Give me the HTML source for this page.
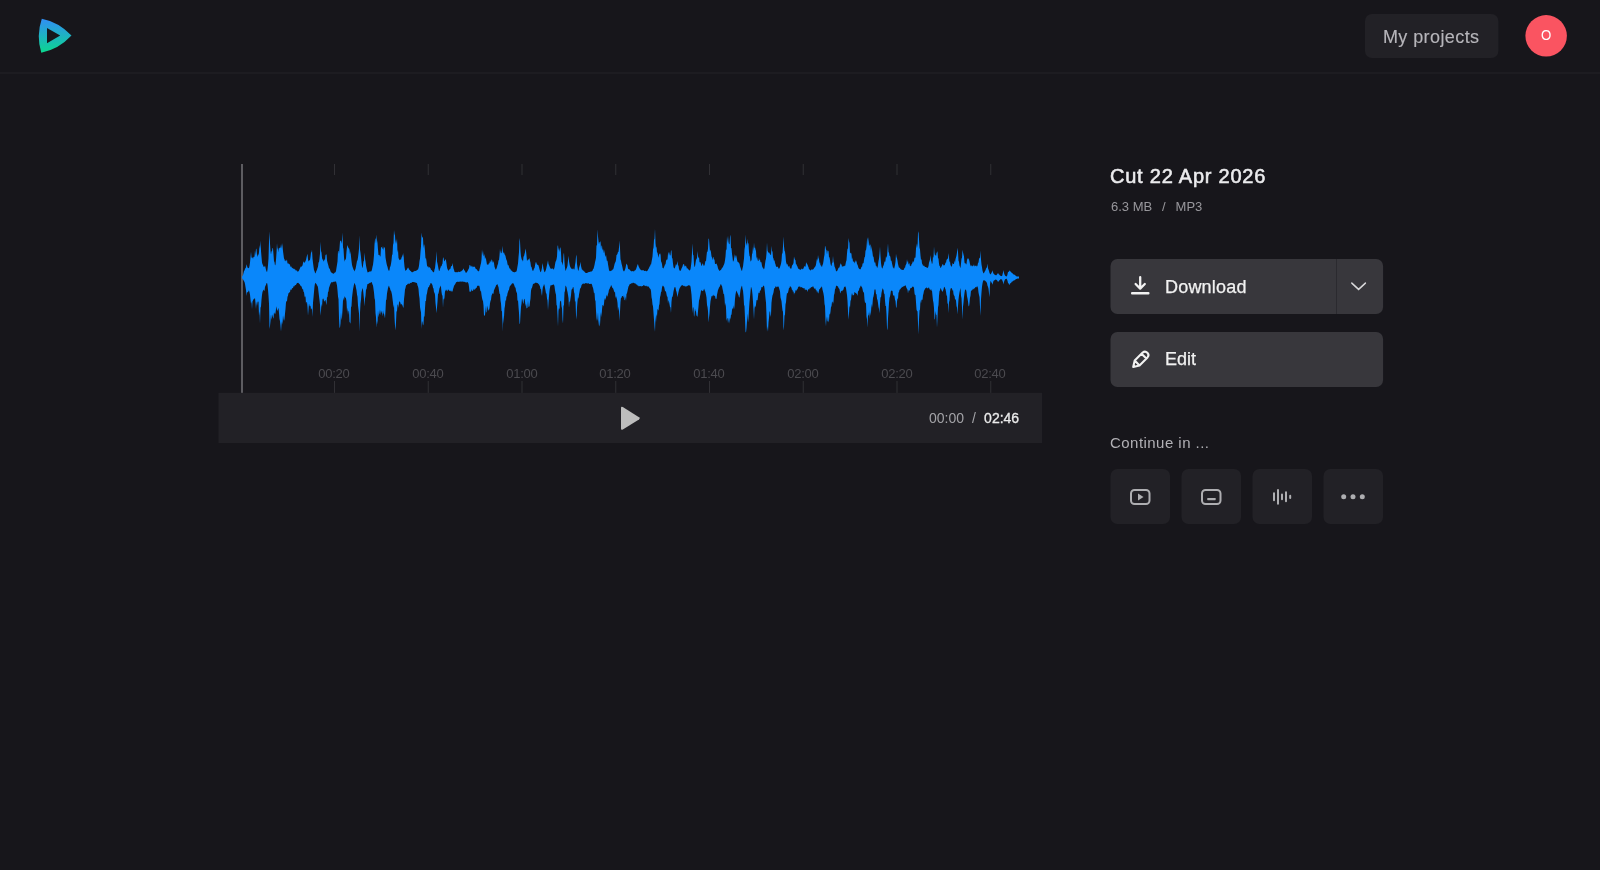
<!DOCTYPE html>
<html><head><meta charset="utf-8">
<style>
*{margin:0;padding:0;box-sizing:border-box}
html,body{width:1600px;height:870px;overflow:hidden;background:#17161b;font-family:"Liberation Sans",sans-serif}
.abs{position:absolute}
div{will-change:transform}
#myproj{position:absolute;left:1365px;top:14px;height:44px;color:#b6b5ba;font-size:18px;line-height:44px;padding-top:0.5px;padding-left:17.9px;letter-spacing:0.42px;white-space:nowrap;-webkit-text-stroke:0.15px #b6b5ba}
#avatar{position:absolute;left:1525.4px;top:15.1px;width:41.5px;height:41.5px;color:#fff;font-size:14.4px;line-height:41.5px;text-align:center}
#avatar span{display:inline-block;transform:translate(0.6px,0px) scaleX(0.92)}
.lbl{position:absolute;top:366px;width:60px;margin-left:-30px;text-align:center;font-size:13px;color:#4b4a4f;line-height:16px;letter-spacing:-0.3px;text-indent:-0.3px}
#time{position:absolute;top:410px;left:928.9px;font-size:14px;line-height:16px;color:#a3a3a7;white-space:nowrap}
#time b{font-weight:normal;color:#ebebeb;-webkit-text-stroke:0.3px #ebebeb}
#title{position:absolute;left:1110.35px;top:164.4px;font-size:20px;-webkit-text-stroke:0.55px #ececee;color:#ececee;line-height:24px;letter-spacing:0.77px;white-space:nowrap}
#sub{position:absolute;left:1110.6px;top:199px;font-size:13px;color:#98979c;line-height:16px;white-space:nowrap}
.bt{position:absolute;left:1165px;height:55px;line-height:55px;font-size:18px;color:#f2f2f2;-webkit-text-stroke:0.25px #f2f2f2;letter-spacing:0.2px;white-space:nowrap}
#cont{position:absolute;left:1110px;top:434px;font-size:15px;color:#b1b0b5;line-height:18px;letter-spacing:0.46px;white-space:nowrap}
</style></head><body>
<svg class="abs" style="left:0;top:0" width="1600" height="870" viewBox="0 0 1600 870">
<defs><linearGradient id="lg" x1="0" y1="0" x2="0" y2="1"><stop offset="0" stop-color="#318ef5"/><stop offset="1" stop-color="#0bd88e"/></linearGradient></defs>
<!-- header -->
<rect x="0" y="72" width="1600" height="2" fill="#1d1c21"/>
<path fill="url(#lg)" fill-rule="evenodd" d="M41.8 18.8 Q58.5 22 71.5 35.6 Q58.5 49.5 41.3 52.8 Q36 36 41.8 18.8 Z M47 28 L47 43.3 L60.2 35.6 Z"/>
<rect x="1365" y="14" width="133.4" height="44" rx="7" fill="#222126"/>
<circle cx="1546.15" cy="35.85" r="20.75" fill="#fa5461"/>
<!-- waveform -->
<g fill="#313035">
<rect x="334.00" y="164" width="1" height="11"/><rect x="334.00" y="381" width="1" height="12"/>
<rect x="427.75" y="164" width="1" height="11"/><rect x="427.75" y="381" width="1" height="12"/>
<rect x="521.50" y="164" width="1" height="11"/><rect x="521.50" y="381" width="1" height="12"/>
<rect x="615.25" y="164" width="1" height="11"/><rect x="615.25" y="381" width="1" height="12"/>
<rect x="709.00" y="164" width="1" height="11"/><rect x="709.00" y="381" width="1" height="12"/>
<rect x="802.75" y="164" width="1" height="11"/><rect x="802.75" y="381" width="1" height="12"/>
<rect x="896.50" y="164" width="1" height="11"/><rect x="896.50" y="381" width="1" height="12"/>
<rect x="990.25" y="164" width="1" height="11"/><rect x="990.25" y="381" width="1" height="12"/>
</g>
<rect x="241" y="164" width="2" height="229" fill="#5d5c61"/>
<path fill="#0a87fa" d="M242 277.5 L242.0 276.5 L242.5 275.9 L243.0 275.0 L243.5 273.1 L244.0 270.9 L244.5 270.4 L245.0 269.0 L245.5 268.1 L246.0 267.6 L246.5 264.3 L247.0 265.8 L247.5 267.8 L248.0 267.8 L248.5 268.2 L249.0 267.9 L249.5 266.0 L250.0 262.5 L250.5 257.2 L251.0 251.7 L251.5 257.2 L252.0 258.1 L252.5 257.3 L253.0 259.0 L253.5 256.7 L254.0 257.0 L254.5 256.4 L255.0 250.3 L255.5 255.4 L256.0 248.4 L256.5 249.3 L257.0 254.9 L257.5 257.0 L258.0 253.7 L258.5 255.5 L259.0 252.0 L259.5 245.0 L260.0 248.8 L260.5 240.5 L261.0 251.0 L261.5 256.7 L262.0 262.5 L262.5 264.3 L263.0 265.1 L263.5 266.7 L264.0 266.8 L264.5 266.7 L265.0 265.6 L265.5 267.6 L266.0 269.7 L266.5 271.2 L267.0 272.2 L267.5 269.4 L268.0 265.0 L268.5 258.4 L269.0 241.7 L269.5 231.2 L270.0 243.5 L270.5 251.1 L271.0 254.4 L271.5 251.3 L272.0 251.2 L272.5 247.7 L273.0 248.4 L273.5 254.4 L274.0 261.2 L274.5 261.9 L275.0 265.6 L275.5 264.4 L276.0 259.7 L276.5 252.7 L277.0 243.1 L277.5 249.7 L278.0 247.3 L278.5 252.6 L279.0 247.7 L279.5 248.4 L280.0 247.3 L280.5 248.1 L281.0 244.2 L281.5 248.8 L282.0 243.1 L282.5 246.0 L283.0 251.1 L283.5 254.7 L284.0 258.5 L284.5 259.2 L285.0 261.6 L285.5 260.1 L286.0 261.6 L286.5 260.3 L287.0 259.6 L287.5 264.0 L288.0 262.6 L288.5 263.8 L289.0 264.3 L289.5 264.1 L290.0 265.0 L290.5 266.7 L291.0 266.8 L291.5 266.6 L292.0 268.2 L292.5 267.7 L293.0 268.5 L293.5 268.9 L294.0 268.2 L294.5 269.5 L295.0 269.0 L295.5 270.2 L296.0 270.4 L296.5 270.6 L297.0 270.6 L297.5 271.7 L298.0 271.5 L298.5 271.2 L299.0 270.4 L299.5 269.2 L300.0 268.3 L300.5 266.9 L301.0 266.3 L301.5 266.9 L302.0 265.9 L302.5 265.4 L303.0 263.0 L303.5 261.8 L304.0 261.6 L304.5 263.1 L305.0 262.2 L305.5 261.0 L306.0 260.0 L306.5 257.4 L307.0 255.5 L307.5 253.7 L308.0 258.9 L308.5 261.6 L309.0 260.8 L309.5 260.3 L310.0 259.9 L310.5 257.1 L311.0 252.6 L311.5 252.2 L312.0 249.7 L312.5 258.5 L313.0 262.8 L313.5 266.4 L314.0 270.0 L314.5 271.1 L315.0 272.8 L315.5 273.5 L316.0 271.9 L316.5 270.7 L317.0 269.7 L317.5 268.0 L318.0 266.7 L318.5 262.6 L319.0 262.0 L319.5 258.6 L320.0 253.4 L320.5 241.8 L321.0 251.1 L321.5 252.5 L322.0 257.4 L322.5 260.0 L323.0 259.0 L323.5 261.4 L324.0 261.1 L324.5 259.0 L325.0 260.3 L325.5 254.5 L326.0 255.3 L326.5 253.7 L327.0 260.5 L327.5 262.4 L328.0 264.2 L328.5 266.1 L329.0 268.2 L329.5 268.4 L330.0 269.6 L330.5 271.2 L331.0 272.2 L331.5 272.6 L332.0 273.1 L332.5 273.3 L333.0 273.4 L333.5 273.7 L334.0 273.5 L334.5 272.7 L335.0 272.6 L335.5 272.2 L336.0 270.9 L336.5 267.8 L337.0 264.8 L337.5 261.5 L338.0 251.1 L338.5 251.0 L339.0 254.0 L339.5 247.9 L340.0 241.6 L340.5 240.7 L341.0 240.5 L341.5 243.7 L342.0 240.3 L342.5 232.6 L343.0 247.2 L343.5 249.0 L344.0 257.0 L344.5 261.7 L345.0 259.7 L345.5 259.8 L346.0 258.2 L346.5 251.5 L347.0 247.1 L347.5 245.1 L348.0 246.9 L348.5 248.0 L349.0 248.5 L349.5 249.7 L350.0 254.4 L350.5 251.1 L351.0 256.5 L351.5 260.9 L352.0 264.8 L352.5 266.8 L353.0 267.9 L353.5 269.4 L354.0 270.3 L354.5 271.6 L355.0 270.1 L355.5 269.1 L356.0 266.4 L356.5 263.8 L357.0 260.9 L357.5 260.2 L358.0 257.5 L358.5 253.4 L359.0 248.7 L359.5 235.2 L360.0 249.7 L360.5 252.8 L361.0 257.0 L361.5 262.0 L362.0 266.5 L362.5 268.3 L363.0 265.4 L363.5 261.4 L364.0 260.7 L364.5 252.4 L365.0 258.7 L365.5 261.7 L366.0 265.4 L366.5 268.1 L367.0 270.3 L367.5 272.2 L368.0 272.5 L368.5 271.9 L369.0 272.1 L369.5 271.6 L370.0 271.2 L370.5 271.6 L371.0 271.4 L371.5 270.9 L372.0 269.3 L372.5 266.7 L373.0 264.8 L373.5 260.8 L374.0 255.1 L374.5 244.5 L375.0 239.4 L375.5 237.9 L376.0 243.8 L376.5 234.6 L377.0 240.0 L377.5 242.9 L378.0 249.6 L378.5 255.1 L379.0 255.0 L379.5 254.8 L380.0 256.5 L380.5 256.3 L381.0 247.1 L381.5 247.1 L382.0 247.9 L382.5 249.2 L383.0 245.8 L383.5 250.4 L384.0 246.8 L384.5 247.4 L385.0 248.4 L385.5 257.6 L386.0 260.6 L386.5 263.2 L387.0 265.6 L387.5 266.8 L388.0 269.0 L388.5 270.2 L389.0 270.9 L389.5 269.9 L390.0 267.1 L390.5 266.3 L391.0 263.8 L391.5 260.5 L392.0 255.2 L392.5 254.2 L393.0 244.9 L393.5 242.9 L394.0 229.9 L394.5 233.9 L395.0 235.5 L395.5 243.8 L396.0 239.3 L396.5 243.9 L397.0 237.9 L397.5 252.6 L398.0 249.7 L398.5 257.9 L399.0 259.0 L399.5 260.3 L400.0 259.4 L400.5 259.4 L401.0 259.7 L401.5 257.8 L402.0 256.6 L402.5 254.1 L403.0 257.6 L403.5 252.4 L404.0 261.3 L404.5 266.6 L405.0 269.5 L405.5 270.9 L406.0 270.2 L406.5 269.9 L407.0 269.3 L407.5 268.3 L408.0 267.6 L408.5 268.0 L409.0 269.4 L409.5 269.8 L410.0 270.4 L410.5 271.0 L411.0 271.3 L411.5 272.0 L412.0 272.2 L412.5 272.2 L413.0 272.0 L413.5 271.4 L414.0 271.4 L414.5 271.1 L415.0 270.8 L415.5 270.9 L416.0 271.0 L416.5 270.5 L417.0 269.9 L417.5 269.7 L418.0 269.6 L418.5 268.1 L419.0 265.7 L419.5 261.0 L420.0 258.6 L420.5 251.7 L421.0 246.3 L421.5 232.6 L422.0 236.6 L422.5 237.3 L423.0 238.1 L423.5 248.3 L424.0 243.9 L424.5 245.8 L425.0 251.0 L425.5 258.7 L426.0 258.1 L426.5 261.1 L427.0 265.6 L427.5 267.1 L428.0 265.8 L428.5 267.4 L429.0 267.6 L429.5 267.0 L430.0 267.7 L430.5 268.3 L431.0 269.7 L431.5 270.0 L432.0 270.5 L432.5 271.2 L433.0 271.9 L433.5 272.2 L434.0 272.2 L434.5 269.5 L435.0 268.1 L435.5 263.4 L436.0 259.1 L436.5 251.1 L437.0 261.4 L437.5 263.6 L438.0 266.0 L438.5 268.7 L439.0 270.9 L439.5 270.7 L440.0 268.7 L440.5 267.7 L441.0 265.8 L441.5 266.4 L442.0 264.4 L442.5 263.5 L443.0 257.7 L443.5 257.6 L444.0 260.5 L444.5 261.4 L445.0 260.2 L445.5 259.0 L446.0 260.2 L446.5 263.6 L447.0 267.3 L447.5 269.2 L448.0 269.7 L448.5 270.9 L449.0 270.1 L449.5 269.3 L450.0 269.3 L450.5 268.6 L451.0 266.4 L451.5 266.0 L452.0 265.9 L452.5 263.0 L453.0 265.8 L453.5 268.4 L454.0 269.8 L454.5 271.7 L455.0 272.2 L455.5 272.0 L456.0 272.6 L456.5 271.9 L457.0 272.2 L457.5 272.2 L458.0 272.0 L458.5 271.6 L459.0 272.1 L459.5 272.1 L460.0 271.7 L460.5 271.6 L461.0 271.4 L461.5 270.9 L462.0 270.5 L462.5 270.2 L463.0 269.6 L463.5 268.3 L464.0 269.7 L464.5 270.6 L465.0 271.1 L465.5 272.3 L466.0 272.9 L466.5 272.6 L467.0 272.1 L467.5 271.0 L468.0 270.3 L468.5 269.0 L469.0 268.2 L469.5 265.0 L470.0 265.1 L470.5 265.8 L471.0 266.9 L471.5 266.3 L472.0 265.4 L472.5 267.5 L473.0 266.1 L473.5 267.1 L474.0 267.1 L474.5 266.6 L475.0 266.9 L475.5 268.5 L476.0 268.9 L476.5 269.3 L477.0 269.6 L477.5 270.7 L478.0 270.7 L478.5 271.3 L479.0 271.6 L479.5 269.2 L480.0 267.5 L480.5 265.1 L481.0 263.3 L481.5 259.4 L482.0 249.1 L482.5 255.2 L483.0 250.7 L483.5 255.2 L484.0 256.6 L484.5 253.7 L485.0 259.2 L485.5 256.9 L486.0 259.0 L486.5 261.7 L487.0 264.7 L487.5 264.3 L488.0 265.0 L488.5 264.2 L489.0 263.0 L489.5 263.5 L490.0 260.3 L490.5 261.6 L491.0 262.5 L491.5 259.6 L492.0 259.7 L492.5 261.6 L493.0 262.9 L493.5 261.0 L494.0 263.1 L494.5 266.7 L495.0 267.9 L495.5 269.6 L496.0 269.6 L496.5 268.6 L497.0 266.9 L497.5 265.0 L498.0 264.0 L498.5 260.3 L499.0 260.2 L499.5 255.5 L500.0 248.4 L500.5 253.5 L501.0 250.3 L501.5 253.2 L502.0 253.0 L502.5 245.8 L503.0 251.3 L503.5 253.5 L504.0 252.3 L504.5 254.3 L505.0 255.0 L505.5 256.1 L506.0 258.5 L506.5 260.0 L507.0 260.9 L507.5 264.1 L508.0 265.5 L508.5 264.9 L509.0 266.9 L509.5 268.6 L510.0 268.4 L510.5 269.2 L511.0 270.5 L511.5 270.4 L512.0 270.9 L512.5 271.6 L513.0 272.2 L513.5 272.1 L514.0 271.9 L514.5 272.4 L515.0 272.0 L515.5 271.9 L516.0 271.5 L516.5 271.6 L517.0 269.2 L517.5 266.3 L518.0 263.4 L518.5 257.2 L519.0 251.9 L519.5 237.9 L520.0 241.3 L520.5 251.0 L521.0 256.3 L521.5 258.5 L522.0 260.0 L522.5 260.3 L523.0 261.7 L523.5 256.4 L524.0 256.3 L524.5 254.1 L525.0 252.2 L525.5 248.4 L526.0 251.1 L526.5 255.6 L527.0 261.0 L527.5 260.3 L528.0 259.6 L528.5 259.2 L529.0 259.7 L529.5 257.7 L530.0 260.7 L530.5 262.8 L531.0 266.7 L531.5 266.8 L532.0 269.1 L532.5 270.4 L533.0 270.9 L533.5 270.2 L534.0 268.6 L534.5 268.2 L535.0 265.6 L535.5 263.0 L536.0 261.7 L536.5 263.3 L537.0 264.4 L537.5 264.8 L538.0 264.9 L538.5 265.6 L539.0 267.2 L539.5 269.3 L540.0 270.7 L540.5 272.2 L541.0 271.7 L541.5 269.9 L542.0 267.8 L542.5 263.0 L543.0 265.6 L543.5 268.9 L544.0 270.5 L544.5 272.2 L545.0 272.0 L545.5 270.8 L546.0 269.4 L546.5 267.2 L547.0 265.1 L547.5 262.8 L548.0 260.3 L548.5 264.1 L549.0 264.9 L549.5 266.3 L550.0 267.5 L550.5 268.3 L551.0 269.3 L551.5 268.2 L552.0 269.3 L552.5 268.3 L553.0 268.5 L553.5 269.8 L554.0 268.9 L554.5 267.4 L555.0 264.6 L555.5 261.7 L556.0 261.1 L556.5 259.2 L557.0 256.5 L557.5 246.4 L558.0 245.1 L558.5 250.6 L559.0 247.4 L559.5 251.9 L560.0 248.6 L560.5 247.1 L561.0 252.5 L561.5 261.9 L562.0 262.5 L562.5 265.6 L563.0 262.0 L563.5 254.8 L564.0 252.4 L564.5 262.3 L565.0 267.7 L565.5 270.9 L566.0 269.9 L566.5 268.6 L567.0 267.5 L567.5 265.4 L568.0 260.3 L568.5 255.7 L569.0 260.9 L569.5 263.9 L570.0 266.3 L570.5 267.3 L571.0 268.3 L571.5 269.0 L572.0 268.3 L572.5 269.6 L573.0 268.6 L573.5 268.6 L574.0 269.7 L574.5 268.9 L575.0 265.0 L575.5 262.2 L576.0 256.8 L576.5 254.4 L577.0 264.1 L577.5 267.3 L578.0 269.9 L578.5 270.9 L579.0 268.1 L579.5 266.6 L580.0 264.7 L580.5 261.7 L581.0 266.0 L581.5 268.0 L582.0 269.7 L582.5 269.6 L583.0 270.8 L583.5 270.6 L584.0 271.6 L584.5 271.4 L585.0 272.4 L585.5 272.7 L586.0 272.9 L586.5 272.9 L587.0 273.1 L587.5 272.8 L588.0 272.3 L588.5 272.2 L589.0 272.1 L589.5 272.1 L590.0 271.8 L590.5 271.6 L591.0 271.8 L591.5 271.6 L592.0 270.9 L592.5 270.7 L593.0 269.3 L593.5 268.8 L594.0 266.9 L594.5 265.1 L595.0 262.3 L595.5 260.3 L596.0 257.7 L596.5 244.7 L597.0 245.9 L597.5 229.3 L598.0 236.6 L598.5 241.2 L599.0 244.4 L599.5 241.8 L600.0 242.5 L600.5 240.8 L601.0 248.9 L601.5 245.6 L602.0 245.8 L602.5 250.4 L603.0 248.7 L603.5 250.9 L604.0 253.5 L604.5 249.8 L605.0 255.4 L605.5 256.9 L606.0 254.3 L606.5 258.6 L607.0 261.5 L607.5 260.3 L608.0 264.3 L608.5 267.0 L609.0 269.9 L609.5 270.9 L610.0 271.2 L610.5 270.9 L611.0 270.8 L611.5 270.4 L612.0 270.5 L612.5 269.6 L613.0 269.5 L613.5 268.5 L614.0 266.6 L614.5 264.2 L615.0 262.8 L615.5 262.1 L616.0 260.1 L616.5 255.0 L617.0 254.8 L617.5 253.7 L618.0 251.8 L618.5 252.0 L619.0 247.2 L619.5 240.5 L620.0 248.4 L620.5 259.2 L621.0 260.8 L621.5 263.6 L622.0 265.6 L622.5 267.6 L623.0 269.9 L623.5 271.1 L624.0 271.6 L624.5 270.7 L625.0 269.5 L625.5 268.1 L626.0 265.3 L626.5 263.6 L627.0 264.5 L627.5 265.6 L628.0 268.4 L628.5 269.2 L629.0 268.9 L629.5 269.6 L630.0 270.2 L630.5 270.7 L631.0 270.7 L631.5 271.5 L632.0 271.3 L632.5 270.9 L633.0 271.2 L633.5 271.3 L634.0 271.6 L634.5 270.4 L635.0 270.4 L635.5 269.9 L636.0 269.2 L636.5 267.7 L637.0 266.3 L637.5 264.4 L638.0 264.3 L638.5 266.0 L639.0 267.2 L639.5 268.0 L640.0 269.2 L640.5 269.6 L641.0 269.9 L641.5 270.5 L642.0 269.9 L642.5 270.5 L643.0 270.0 L643.5 270.3 L644.0 270.7 L644.5 270.9 L645.0 271.0 L645.5 270.7 L646.0 270.7 L646.5 271.4 L647.0 270.9 L647.5 270.8 L648.0 269.7 L648.5 268.8 L649.0 268.3 L649.5 266.3 L650.0 266.7 L650.5 264.2 L651.0 264.8 L651.5 262.0 L652.0 259.3 L652.5 256.4 L653.0 249.5 L653.5 247.5 L654.0 239.7 L654.5 238.7 L655.0 228.6 L655.5 242.9 L656.0 248.0 L656.5 246.2 L657.0 252.4 L657.5 252.6 L658.0 255.6 L658.5 257.7 L659.0 254.4 L659.5 253.3 L660.0 255.1 L660.5 253.1 L661.0 261.2 L661.5 262.2 L662.0 264.1 L662.5 267.8 L663.0 268.3 L663.5 268.5 L664.0 267.1 L664.5 266.0 L665.0 264.2 L665.5 264.6 L666.0 261.1 L666.5 259.8 L667.0 259.4 L667.5 259.5 L668.0 253.7 L668.5 251.7 L669.0 255.8 L669.5 251.8 L670.0 255.6 L670.5 255.3 L671.0 250.6 L671.5 250.4 L672.0 258.1 L672.5 258.5 L673.0 263.6 L673.5 266.9 L674.0 268.3 L674.5 268.5 L675.0 267.4 L675.5 265.9 L676.0 264.0 L676.5 265.4 L677.0 263.4 L677.5 261.0 L678.0 265.5 L678.5 265.5 L679.0 268.9 L679.5 270.2 L680.0 270.9 L680.5 270.8 L681.0 269.9 L681.5 268.4 L682.0 267.4 L682.5 266.5 L683.0 264.6 L683.5 264.3 L684.0 264.1 L684.5 266.1 L685.0 266.8 L685.5 265.6 L686.0 265.9 L686.5 266.9 L687.0 268.8 L687.5 268.1 L688.0 269.0 L688.5 269.4 L689.0 269.9 L689.5 270.4 L690.0 270.2 L690.5 269.0 L691.0 265.7 L691.5 261.6 L692.0 252.4 L692.5 243.2 L693.0 254.6 L693.5 255.5 L694.0 264.1 L694.5 266.9 L695.0 266.4 L695.5 262.9 L696.0 260.1 L696.5 258.9 L697.0 258.1 L697.5 251.1 L698.0 255.9 L698.5 258.3 L699.0 257.0 L699.5 262.1 L700.0 262.6 L700.5 261.9 L701.0 264.3 L701.5 266.3 L702.0 265.0 L702.5 263.6 L703.0 263.6 L703.5 265.8 L704.0 265.6 L704.5 265.4 L705.0 263.0 L705.5 260.8 L706.0 261.3 L706.5 255.9 L707.0 251.4 L707.5 251.9 L708.0 248.6 L708.5 238.5 L709.0 239.0 L709.5 245.5 L710.0 251.3 L710.5 249.6 L711.0 252.4 L711.5 256.2 L712.0 257.6 L712.5 260.2 L713.0 256.9 L713.5 257.2 L714.0 259.7 L714.5 259.3 L715.0 264.0 L715.5 263.9 L716.0 263.8 L716.5 263.6 L717.0 264.7 L717.5 266.1 L718.0 268.3 L718.5 269.4 L719.0 270.0 L719.5 270.9 L720.0 270.8 L720.5 269.9 L721.0 270.1 L721.5 268.8 L722.0 268.3 L722.5 267.4 L723.0 266.7 L723.5 265.6 L724.0 264.6 L724.5 263.1 L725.0 260.3 L725.5 256.6 L726.0 249.0 L726.5 250.4 L727.0 236.5 L727.5 243.1 L728.0 235.6 L728.5 242.0 L729.0 244.1 L729.5 244.3 L730.0 237.1 L730.5 234.6 L731.0 248.3 L731.5 247.9 L732.0 253.7 L732.5 257.3 L733.0 261.7 L733.5 261.1 L734.0 259.6 L734.5 253.7 L735.0 258.4 L735.5 256.1 L736.0 255.0 L736.5 256.7 L737.0 259.5 L737.5 261.8 L738.0 262.0 L738.5 262.3 L739.0 263.2 L739.5 263.6 L740.0 266.0 L740.5 267.4 L741.0 269.0 L741.5 270.6 L742.0 270.9 L742.5 268.3 L743.0 266.6 L743.5 262.2 L744.0 258.4 L744.5 249.4 L745.0 246.4 L745.5 234.6 L746.0 242.8 L746.5 243.9 L747.0 246.1 L747.5 238.7 L748.0 243.4 L748.5 243.2 L749.0 252.0 L749.5 255.9 L750.0 256.5 L750.5 261.7 L751.0 260.8 L751.5 260.2 L752.0 254.5 L752.5 252.7 L753.0 246.6 L753.5 251.3 L754.0 242.5 L754.5 248.2 L755.0 247.3 L755.5 249.4 L756.0 250.9 L756.5 258.7 L757.0 256.4 L757.5 259.3 L758.0 260.9 L758.5 261.1 L759.0 257.8 L759.5 260.3 L760.0 259.4 L760.5 262.4 L761.0 261.7 L761.5 262.7 L762.0 265.7 L762.5 267.5 L763.0 267.7 L763.5 268.8 L764.0 269.6 L764.5 267.8 L765.0 264.1 L765.5 260.6 L766.0 258.8 L766.5 253.2 L767.0 242.5 L767.5 250.5 L768.0 251.7 L768.5 253.1 L769.0 252.1 L769.5 253.7 L770.0 253.2 L770.5 254.9 L771.0 254.9 L771.5 245.8 L772.0 251.4 L772.5 251.3 L773.0 257.4 L773.5 258.6 L774.0 261.1 L774.5 260.1 L775.0 262.9 L775.5 264.3 L776.0 266.6 L776.5 266.9 L777.0 266.6 L777.5 266.7 L778.0 267.0 L778.5 268.5 L779.0 268.7 L779.5 268.3 L780.0 266.9 L780.5 265.5 L781.0 263.7 L781.5 260.8 L782.0 253.5 L782.5 253.6 L783.0 246.2 L783.5 236.5 L784.0 246.2 L784.5 250.7 L785.0 251.8 L785.5 255.4 L786.0 261.7 L786.5 263.5 L787.0 264.7 L787.5 263.7 L788.0 265.9 L788.5 267.0 L789.0 265.6 L789.5 266.4 L790.0 268.2 L790.5 268.3 L791.0 268.9 L791.5 267.9 L792.0 265.4 L792.5 264.9 L793.0 264.2 L793.5 263.1 L794.0 256.4 L794.5 258.6 L795.0 259.8 L795.5 260.2 L796.0 264.8 L796.5 264.1 L797.0 266.0 L797.5 266.6 L798.0 268.3 L798.5 268.8 L799.0 269.2 L799.5 269.6 L800.0 269.2 L800.5 270.0 L801.0 269.4 L801.5 268.8 L802.0 268.4 L802.5 269.3 L803.0 269.3 L803.5 268.3 L804.0 267.0 L804.5 266.1 L805.0 266.4 L805.5 266.7 L806.0 263.2 L806.5 262.3 L807.0 264.4 L807.5 264.2 L808.0 266.3 L808.5 267.1 L809.0 269.2 L809.5 269.3 L810.0 270.2 L810.5 270.5 L811.0 270.1 L811.5 269.4 L812.0 269.2 L812.5 269.7 L813.0 269.5 L813.5 269.0 L814.0 268.3 L814.5 267.5 L815.0 266.7 L815.5 266.3 L816.0 264.6 L816.5 261.3 L817.0 258.6 L817.5 261.0 L818.0 255.0 L818.5 258.1 L819.0 258.9 L819.5 263.7 L820.0 261.9 L820.5 265.6 L821.0 265.3 L821.5 266.5 L822.0 266.9 L822.5 265.0 L823.0 263.9 L823.5 261.0 L824.0 257.2 L824.5 254.7 L825.0 245.8 L825.5 246.8 L826.0 249.5 L826.5 250.2 L827.0 254.4 L827.5 249.9 L828.0 251.6 L828.5 250.4 L829.0 257.3 L829.5 257.3 L830.0 260.1 L830.5 263.8 L831.0 265.6 L831.5 266.0 L832.0 263.1 L832.5 262.5 L833.0 255.7 L833.5 261.5 L834.0 263.0 L834.5 266.4 L835.0 267.5 L835.5 269.1 L836.0 270.9 L836.5 271.6 L837.0 270.8 L837.5 270.6 L838.0 269.1 L838.5 268.0 L839.0 267.4 L839.5 267.4 L840.0 265.0 L840.5 263.0 L841.0 265.0 L841.5 264.1 L842.0 267.0 L842.5 265.9 L843.0 266.9 L843.5 266.0 L844.0 266.1 L844.5 265.4 L845.0 266.5 L845.5 264.3 L846.0 261.7 L846.5 260.3 L847.0 253.5 L847.5 248.2 L848.0 249.2 L848.5 237.9 L849.0 241.3 L849.5 242.9 L850.0 253.5 L850.5 253.1 L851.0 252.4 L851.5 254.3 L852.0 259.7 L852.5 257.3 L853.0 261.8 L853.5 261.7 L854.0 261.1 L854.5 263.6 L855.0 261.9 L855.5 259.9 L856.0 262.7 L856.5 260.3 L857.0 264.2 L857.5 264.6 L858.0 266.3 L858.5 267.9 L859.0 268.4 L859.5 269.2 L860.0 268.9 L860.5 269.6 L861.0 268.2 L861.5 266.6 L862.0 267.0 L862.5 264.1 L863.0 263.0 L863.5 263.5 L864.0 259.9 L864.5 257.3 L865.0 256.8 L865.5 250.6 L866.0 250.2 L866.5 246.8 L867.0 239.8 L867.5 237.2 L868.0 246.1 L868.5 236.9 L869.0 242.5 L869.5 246.3 L870.0 244.5 L870.5 244.7 L871.0 251.0 L871.5 245.8 L872.0 249.8 L872.5 252.8 L873.0 256.7 L873.5 256.4 L874.0 260.1 L874.5 263.0 L875.0 261.7 L875.5 263.5 L876.0 266.6 L876.5 265.6 L877.0 267.8 L877.5 267.6 L878.0 265.1 L878.5 260.9 L879.0 258.8 L879.5 253.8 L880.0 246.5 L880.5 256.2 L881.0 263.1 L881.5 266.4 L882.0 268.3 L882.5 268.4 L883.0 266.4 L883.5 265.6 L884.0 264.0 L884.5 261.0 L885.0 262.5 L885.5 260.4 L886.0 255.9 L886.5 257.9 L887.0 255.9 L887.5 250.2 L888.0 243.2 L888.5 252.2 L889.0 252.6 L889.5 256.0 L890.0 255.7 L890.5 257.8 L891.0 261.6 L891.5 260.3 L892.0 263.5 L892.5 265.6 L893.0 267.7 L893.5 267.5 L894.0 268.9 L894.5 267.3 L895.0 264.9 L895.5 261.7 L896.0 253.7 L896.5 257.1 L897.0 258.3 L897.5 260.8 L898.0 264.0 L898.5 265.9 L899.0 267.7 L899.5 267.5 L900.0 268.3 L900.5 268.9 L901.0 269.4 L901.5 269.4 L902.0 269.9 L902.5 269.7 L903.0 270.2 L903.5 269.7 L904.0 269.4 L904.5 267.4 L905.0 267.9 L905.5 265.6 L906.0 264.5 L906.5 263.6 L907.0 259.0 L907.5 262.8 L908.0 260.7 L908.5 264.7 L909.0 263.6 L909.5 263.3 L910.0 266.4 L910.5 265.6 L911.0 266.3 L911.5 264.3 L912.0 263.8 L912.5 262.4 L913.0 260.7 L913.5 262.5 L914.0 260.8 L914.5 257.7 L915.0 257.8 L915.5 257.5 L916.0 248.5 L916.5 246.1 L917.0 243.2 L917.5 247.8 L918.0 233.2 L918.5 231.3 L919.0 239.2 L919.5 247.6 L920.0 249.6 L920.5 255.6 L921.0 260.0 L921.5 259.0 L922.0 263.6 L922.5 264.2 L923.0 265.8 L923.5 265.8 L924.0 265.6 L924.5 266.3 L925.0 266.9 L925.5 267.1 L926.0 266.9 L926.5 267.3 L927.0 268.2 L927.5 267.8 L928.0 267.6 L928.5 266.1 L929.0 262.8 L929.5 261.2 L930.0 259.6 L930.5 255.0 L931.0 260.2 L931.5 261.7 L932.0 264.3 L932.5 262.8 L933.0 256.3 L933.5 257.9 L934.0 246.5 L934.5 253.0 L935.0 255.6 L935.5 254.6 L936.0 256.4 L936.5 252.8 L937.0 252.4 L937.5 251.1 L938.0 258.3 L938.5 258.6 L939.0 263.7 L939.5 266.0 L940.0 266.3 L940.5 268.3 L941.0 267.5 L941.5 266.4 L942.0 265.4 L942.5 264.3 L943.0 264.0 L943.5 265.7 L944.0 265.1 L944.5 265.6 L945.0 264.4 L945.5 262.6 L946.0 262.8 L946.5 260.1 L947.0 259.3 L947.5 259.1 L948.0 258.0 L948.5 253.1 L949.0 257.4 L949.5 262.5 L950.0 261.0 L950.5 265.6 L951.0 265.6 L951.5 266.9 L952.0 266.1 L952.5 262.8 L953.0 264.0 L953.5 264.1 L954.0 263.8 L954.5 260.3 L955.0 262.8 L955.5 259.0 L956.0 257.6 L956.5 255.4 L957.0 252.2 L957.5 247.8 L958.0 252.1 L958.5 260.8 L959.0 261.8 L959.5 265.5 L960.0 266.8 L960.5 268.3 L961.0 263.4 L961.5 258.6 L962.0 258.0 L962.5 249.8 L963.0 252.5 L963.5 254.6 L964.0 256.6 L964.5 262.4 L965.0 263.4 L965.5 263.0 L966.0 264.5 L966.5 264.1 L967.0 259.8 L967.5 258.9 L968.0 257.7 L968.5 259.0 L969.0 259.5 L969.5 261.6 L970.0 264.0 L970.5 265.6 L971.0 266.4 L971.5 265.6 L972.0 265.3 L972.5 266.5 L973.0 266.0 L973.5 265.5 L974.0 264.3 L974.5 266.5 L975.0 266.0 L975.5 266.1 L976.0 265.1 L976.5 266.2 L977.0 266.5 L977.5 265.6 L978.0 263.0 L978.5 262.6 L979.0 258.9 L979.5 257.5 L980.0 258.5 L980.5 250.4 L981.0 259.6 L981.5 264.4 L982.0 267.3 L982.5 270.6 L983.0 272.3 L983.5 273.6 L984.0 272.8 L984.5 272.3 L985.0 270.8 L985.5 270.5 L986.0 268.4 L986.5 268.1 L987.0 267.1 L987.5 263.6 L988.0 268.2 L988.5 269.5 L989.0 270.9 L989.5 273.1 L990.0 273.8 L990.5 274.5 L991.0 273.8 L991.5 272.7 L992.0 271.9 L992.5 270.3 L993.0 272.3 L993.5 273.5 L994.0 274.2 L994.5 274.5 L995.0 275.1 L995.5 275.1 L996.0 275.4 L996.5 275.1 L997.0 274.6 L997.5 273.8 L998.0 273.0 L998.5 273.7 L999.0 274.6 L999.5 274.8 L1000.0 275.5 L1000.5 275.8 L1001.0 275.9 L1001.5 276.1 L1002.0 276.2 L1002.5 274.6 L1003.0 272.6 L1003.5 269.9 L1004.0 273.1 L1004.5 274.6 L1005.0 275.5 L1005.5 276.0 L1006.0 276.2 L1006.5 276.5 L1007.0 275.9 L1007.5 274.3 L1008.0 272.0 L1008.5 272.0 L1009.0 271.2 L1009.5 270.3 L1010.0 271.4 L1010.5 271.3 L1011.0 272.0 L1011.5 272.6 L1012.0 273.2 L1012.5 273.3 L1013.0 273.8 L1013.5 274.4 L1014.0 274.6 L1014.5 274.8 L1015.0 275.0 L1015.5 275.6 L1016.0 276.3 L1016.5 276.3 L1017.0 276.4 L1017.5 276.5 L1018.0 276.5 L1018.5 276.6 L1019.0 276.5 L1019.0 278.5 L1018.5 278.5 L1018.0 278.5 L1017.5 278.5 L1017.0 278.7 L1016.5 278.9 L1016.0 279.0 L1015.5 279.4 L1015.0 280.0 L1014.5 280.3 L1014.0 280.4 L1013.5 280.6 L1013.0 281.2 L1012.5 281.5 L1012.0 281.6 L1011.5 282.3 L1011.0 283.0 L1010.5 283.2 L1010.0 283.5 L1009.5 285.1 L1009.0 284.6 L1008.5 283.2 L1008.0 283.0 L1007.5 280.8 L1007.0 279.4 L1006.5 278.6 L1006.0 278.9 L1005.5 279.1 L1005.0 279.6 L1004.5 280.4 L1004.0 282.0 L1003.5 284.4 L1003.0 282.1 L1002.5 280.9 L1002.0 279.4 L1001.5 279.4 L1001.0 279.1 L1000.5 279.2 L1000.0 279.7 L999.5 280.2 L999.0 280.7 L998.5 281.5 L998.0 282.0 L997.5 281.0 L997.0 280.3 L996.5 280.0 L996.0 279.6 L995.5 279.6 L995.0 280.0 L994.5 280.2 L994.0 280.5 L993.5 281.1 L993.0 282.7 L992.5 284.8 L992.0 283.3 L991.5 282.6 L991.0 281.6 L990.5 281.0 L990.0 284.6 L989.5 297.3 L989.0 293.3 L988.5 288.7 L988.0 286.8 L987.5 285.7 L987.0 283.3 L986.5 282.3 L986.0 281.5 L985.5 281.3 L985.0 280.6 L984.5 280.4 L984.0 280.3 L983.5 280.2 L983.0 281.3 L982.5 283.5 L982.0 286.7 L981.5 292.4 L981.0 299.5 L980.5 315.9 L980.0 307.2 L979.5 297.1 L979.0 295.1 L978.5 292.4 L978.0 288.1 L977.5 286.8 L977.0 285.9 L976.5 287.6 L976.0 286.9 L975.5 287.1 L975.0 288.1 L974.5 288.0 L974.0 289.4 L973.5 288.9 L973.0 288.5 L972.5 289.7 L972.0 290.2 L971.5 290.7 L971.0 290.5 L970.5 295.8 L970.0 297.7 L969.5 303.3 L969.0 306.6 L968.5 305.7 L968.0 301.4 L967.5 298.6 L967.0 296.2 L966.5 291.8 L966.0 289.7 L965.5 289.4 L965.0 290.1 L964.5 293.0 L964.0 297.0 L963.5 302.6 L963.0 306.7 L962.5 319.8 L962.0 308.0 L961.5 298.3 L961.0 295.8 L960.5 288.1 L960.0 289.9 L959.5 292.6 L959.0 295.5 L958.5 299.4 L958.0 305.9 L957.5 314.5 L957.0 307.8 L956.5 306.1 L956.0 300.4 L955.5 299.2 L955.0 299.2 L954.5 296.0 L954.0 295.6 L953.5 294.1 L953.0 289.7 L952.5 291.1 L952.0 288.6 L951.5 288.3 L951.0 288.1 L950.5 288.9 L950.0 291.8 L949.5 300.4 L949.0 302.2 L948.5 313.2 L948.0 303.5 L947.5 303.7 L947.0 295.8 L946.5 295.6 L946.0 291.7 L945.5 289.2 L945.0 288.3 L944.5 286.8 L944.0 287.3 L943.5 289.4 L943.0 290.8 L942.5 292.1 L942.0 291.0 L941.5 290.3 L941.0 288.8 L940.5 288.1 L940.0 290.2 L939.5 291.3 L939.0 295.7 L938.5 305.0 L938.0 307.5 L937.5 317.8 L937.0 327.8 L936.5 315.0 L936.0 314.5 L935.5 311.1 L935.0 318.8 L934.5 319.8 L934.0 308.3 L933.5 303.1 L933.0 300.5 L932.5 296.0 L932.0 290.7 L931.5 290.7 L931.0 288.6 L930.5 290.4 L930.0 289.8 L929.5 289.0 L929.0 287.6 L928.5 287.6 L928.0 288.5 L927.5 288.1 L927.0 288.6 L926.5 287.3 L926.0 287.8 L925.5 288.3 L925.0 288.7 L924.5 290.1 L924.0 290.7 L923.5 293.6 L923.0 295.3 L922.5 300.0 L922.0 299.5 L921.5 300.0 L921.0 303.5 L920.5 300.3 L920.0 309.5 L919.5 310.6 L919.0 319.8 L918.5 334.4 L918.0 323.6 L917.5 311.3 L917.0 311.1 L916.5 309.5 L916.0 302.4 L915.5 294.8 L915.0 295.3 L914.5 293.3 L914.0 288.1 L913.5 286.7 L913.0 286.8 L912.5 286.4 L912.0 287.2 L911.5 287.9 L911.0 288.1 L910.5 288.1 L910.0 289.5 L909.5 290.9 L909.0 289.9 L908.5 290.8 L908.0 293.4 L907.5 289.7 L907.0 288.8 L906.5 287.9 L906.0 286.6 L905.5 285.3 L905.0 285.5 L904.5 286.0 L904.0 286.3 L903.5 286.2 L903.0 286.7 L902.5 287.2 L902.0 286.6 L901.5 288.1 L901.0 288.1 L900.5 289.1 L900.0 289.4 L899.5 289.7 L899.0 292.3 L898.5 292.6 L898.0 298.9 L897.5 298.3 L897.0 301.8 L896.5 307.9 L896.0 306.9 L895.5 301.0 L895.0 299.7 L894.5 296.4 L894.0 295.0 L893.5 295.9 L893.0 294.7 L892.5 291.1 L892.0 290.8 L891.5 290.7 L891.0 290.5 L890.5 293.7 L890.0 296.4 L889.5 297.7 L889.0 303.1 L888.5 311.0 L888.0 318.6 L887.5 330.4 L887.0 328.0 L886.5 314.6 L886.0 305.9 L885.5 305.9 L885.0 300.7 L884.5 293.5 L884.0 294.1 L883.5 289.5 L883.0 289.6 L882.5 288.1 L882.0 290.7 L881.5 292.9 L881.0 297.4 L880.5 297.0 L880.0 304.1 L879.5 313.2 L879.0 308.9 L878.5 307.1 L878.0 303.1 L877.5 299.9 L877.0 298.7 L876.5 294.0 L876.0 294.2 L875.5 289.5 L875.0 289.4 L874.5 289.4 L874.0 293.7 L873.5 296.5 L873.0 298.0 L872.5 304.2 L872.0 307.9 L871.5 303.8 L871.0 312.3 L870.5 316.1 L870.0 309.8 L869.5 319.0 L869.0 312.0 L868.5 315.8 L868.0 314.9 L867.5 327.8 L867.0 319.3 L866.5 316.8 L866.0 303.5 L865.5 302.4 L865.0 302.7 L864.5 299.8 L864.0 292.7 L863.5 292.3 L863.0 291.6 L862.5 289.1 L862.0 287.3 L861.5 286.8 L861.0 285.5 L860.5 286.1 L860.0 287.8 L859.5 287.7 L859.0 290.2 L858.5 290.8 L858.0 291.4 L857.5 296.0 L857.0 294.2 L856.5 293.7 L856.0 293.1 L855.5 292.9 L855.0 292.2 L854.5 292.1 L854.0 295.1 L853.5 295.0 L853.0 295.7 L852.5 294.7 L852.0 293.1 L851.5 295.2 L851.0 300.1 L850.5 300.7 L850.0 307.7 L849.5 305.4 L849.0 313.8 L848.5 319.8 L848.0 311.3 L847.5 301.0 L847.0 295.0 L846.5 291.8 L846.0 288.3 L845.5 286.8 L845.0 286.2 L844.5 287.1 L844.0 287.3 L843.5 289.4 L843.0 290.1 L842.5 290.5 L842.0 291.6 L841.5 290.7 L841.0 290.9 L840.5 293.4 L840.0 292.2 L839.5 289.2 L839.0 288.6 L838.5 287.9 L838.0 286.6 L837.5 286.3 L837.0 285.9 L836.5 285.5 L836.0 286.3 L835.5 288.4 L835.0 289.2 L834.5 293.5 L834.0 294.9 L833.5 301.7 L833.0 304.0 L832.5 301.4 L832.0 301.9 L831.5 306.3 L831.0 307.1 L830.5 311.7 L830.0 314.7 L829.5 313.5 L829.0 320.8 L828.5 322.5 L828.0 316.6 L827.5 321.3 L827.0 321.5 L826.5 316.2 L826.0 326.4 L825.5 321.1 L825.0 305.9 L824.5 303.9 L824.0 296.7 L823.5 293.8 L823.0 291.6 L822.5 289.8 L822.0 286.8 L821.5 286.5 L821.0 288.0 L820.5 287.4 L820.0 288.9 L819.5 289.0 L819.0 290.6 L818.5 293.1 L818.0 293.4 L817.5 290.8 L817.0 292.7 L816.5 290.1 L816.0 290.5 L815.5 288.9 L815.0 287.9 L814.5 288.9 L814.0 288.3 L813.5 287.1 L813.0 286.1 L812.5 286.8 L812.0 287.5 L811.5 286.9 L811.0 286.9 L810.5 288.6 L810.0 287.8 L809.5 288.7 L809.0 290.0 L808.5 288.7 L808.0 289.8 L807.5 292.1 L807.0 290.3 L806.5 289.7 L806.0 289.5 L805.5 289.5 L805.0 290.5 L804.5 288.3 L804.0 287.9 L803.5 288.4 L803.0 288.1 L802.5 288.1 L802.0 287.0 L801.5 287.6 L801.0 286.8 L800.5 287.8 L800.0 286.2 L799.5 286.8 L799.0 286.6 L798.5 286.8 L798.0 287.5 L797.5 289.3 L797.0 289.2 L796.5 291.0 L796.0 290.1 L795.5 290.5 L795.0 293.1 L794.5 292.7 L794.0 294.7 L793.5 291.0 L793.0 292.3 L792.5 289.7 L792.0 289.9 L791.5 288.1 L791.0 286.7 L790.5 286.7 L790.0 286.1 L789.5 287.9 L789.0 287.9 L788.5 290.6 L788.0 292.5 L787.5 293.4 L787.0 292.9 L786.5 296.5 L786.0 302.2 L785.5 304.6 L785.0 314.5 L784.5 315.8 L784.0 326.7 L783.5 330.4 L783.0 311.8 L782.5 310.6 L782.0 306.3 L781.5 301.2 L781.0 299.2 L780.5 297.6 L780.0 291.2 L779.5 289.8 L779.0 287.8 L778.5 286.8 L778.0 286.3 L777.5 287.0 L777.0 286.5 L776.5 287.4 L776.0 286.2 L775.5 286.5 L775.0 288.0 L774.5 288.1 L774.0 289.2 L773.5 292.4 L773.0 294.2 L772.5 295.5 L772.0 298.5 L771.5 302.7 L771.0 314.5 L770.5 316.9 L770.0 311.1 L769.5 312.2 L769.0 318.0 L768.5 322.5 L768.0 331.5 L767.5 326.3 L767.0 331.7 L766.5 315.6 L766.0 302.7 L765.5 298.3 L765.0 292.9 L764.5 288.4 L764.0 285.5 L763.5 285.7 L763.0 286.2 L762.5 287.4 L762.0 287.1 L761.5 287.1 L761.0 289.6 L760.5 290.7 L760.0 290.4 L759.5 293.2 L759.0 292.9 L758.5 292.4 L758.0 296.7 L757.5 300.4 L757.0 300.0 L756.5 300.2 L756.0 304.5 L755.5 307.5 L755.0 305.8 L754.5 308.6 L754.0 319.8 L753.5 309.9 L753.0 301.9 L752.5 294.8 L752.0 290.2 L751.5 287.9 L751.0 286.8 L750.5 291.8 L750.0 297.0 L749.5 302.3 L749.0 309.2 L748.5 318.5 L748.0 322.8 L747.5 313.6 L747.0 321.1 L746.5 327.9 L746.0 332.6 L745.5 331.7 L745.0 318.2 L744.5 306.5 L744.0 304.4 L743.5 296.1 L743.0 290.8 L742.5 289.0 L742.0 285.5 L741.5 286.6 L741.0 287.9 L740.5 289.9 L740.0 294.0 L739.5 297.3 L739.0 297.6 L738.5 295.2 L738.0 294.3 L737.5 292.9 L737.0 292.1 L736.5 290.5 L736.0 292.1 L735.5 294.4 L735.0 299.0 L734.5 306.6 L734.0 309.4 L733.5 305.3 L733.0 309.1 L732.5 308.1 L732.0 309.9 L731.5 314.9 L731.0 314.6 L730.5 319.8 L730.0 317.2 L729.5 323.8 L729.0 317.8 L728.5 321.1 L728.0 323.3 L727.5 317.7 L727.0 318.7 L726.5 321.1 L726.0 307.9 L725.5 302.8 L725.0 306.0 L724.5 298.2 L724.0 293.8 L723.5 294.2 L723.0 291.1 L722.5 288.8 L722.0 286.1 L721.5 285.4 L721.0 284.1 L720.5 284.5 L720.0 286.0 L719.5 287.1 L719.0 287.4 L718.5 289.0 L718.0 290.0 L717.5 292.6 L717.0 294.8 L716.5 298.7 L716.0 299.1 L715.5 298.5 L715.0 295.6 L714.5 295.7 L714.0 296.3 L713.5 295.2 L713.0 294.5 L712.5 296.4 L712.0 296.0 L711.5 296.2 L711.0 298.8 L710.5 301.2 L710.0 306.6 L709.5 313.5 L709.0 317.6 L708.5 322.5 L708.0 311.3 L707.5 307.1 L707.0 305.1 L706.5 297.6 L706.0 294.7 L705.5 292.4 L705.0 290.7 L704.5 288.6 L704.0 291.2 L703.5 289.0 L703.0 291.3 L702.5 290.7 L702.0 290.9 L701.5 290.0 L701.0 290.7 L700.5 293.9 L700.0 296.2 L699.5 299.0 L699.0 300.6 L698.5 306.5 L698.0 311.2 L697.5 317.2 L697.0 315.6 L696.5 315.9 L696.0 311.6 L695.5 311.0 L695.0 308.5 L694.5 314.9 L694.0 317.0 L693.5 308.3 L693.0 306.7 L692.5 313.2 L692.0 302.4 L691.5 294.8 L691.0 290.5 L690.5 286.7 L690.0 285.5 L689.5 285.3 L689.0 285.9 L688.5 285.1 L688.0 285.3 L687.5 286.2 L687.0 285.7 L686.5 286.8 L686.0 285.9 L685.5 286.8 L685.0 286.3 L684.5 286.2 L684.0 285.6 L683.5 286.3 L683.0 285.5 L682.5 285.0 L682.0 285.5 L681.5 285.5 L681.0 285.8 L680.5 286.9 L680.0 287.4 L679.5 288.6 L679.0 290.0 L678.5 292.1 L678.0 294.5 L677.5 297.3 L677.0 294.2 L676.5 291.7 L676.0 290.6 L675.5 287.7 L675.0 286.8 L674.5 287.6 L674.0 289.3 L673.5 291.5 L673.0 295.1 L672.5 296.8 L672.0 297.2 L671.5 301.9 L671.0 313.2 L670.5 307.3 L670.0 306.9 L669.5 304.2 L669.0 301.4 L668.5 300.1 L668.0 304.0 L667.5 296.5 L667.0 296.7 L666.5 294.3 L666.0 291.8 L665.5 291.2 L665.0 291.0 L664.5 288.6 L664.0 286.6 L663.5 286.5 L663.0 285.5 L662.5 286.1 L662.0 287.6 L661.5 291.4 L661.0 292.2 L660.5 295.5 L660.0 297.3 L659.5 304.0 L659.0 305.6 L658.5 310.8 L658.0 309.5 L657.5 309.0 L657.0 316.5 L656.5 314.1 L656.0 322.5 L655.5 316.3 L655.0 331.7 L654.5 326.9 L654.0 319.8 L653.5 312.9 L653.0 306.2 L652.5 304.4 L652.0 299.5 L651.5 297.3 L651.0 291.1 L650.5 289.0 L650.0 288.7 L649.5 288.1 L649.0 287.2 L648.5 286.3 L648.0 286.8 L647.5 286.3 L647.0 286.5 L646.5 286.0 L646.0 285.5 L645.5 286.2 L645.0 286.0 L644.5 285.5 L644.0 285.3 L643.5 284.9 L643.0 285.9 L642.5 286.0 L642.0 286.3 L641.5 286.3 L641.0 286.6 L640.5 286.0 L640.0 286.0 L639.5 285.9 L639.0 286.8 L638.5 285.7 L638.0 285.8 L637.5 285.5 L637.0 284.6 L636.5 284.4 L636.0 284.4 L635.5 283.6 L635.0 283.3 L634.5 283.4 L634.0 282.8 L633.5 283.0 L633.0 282.6 L632.5 283.3 L632.0 283.3 L631.5 283.1 L631.0 283.9 L630.5 283.8 L630.0 284.1 L629.5 284.4 L629.0 285.8 L628.5 286.6 L628.0 288.4 L627.5 290.9 L627.0 293.2 L626.5 293.9 L626.0 301.3 L625.5 296.3 L625.0 300.0 L624.5 300.2 L624.0 295.0 L623.5 297.9 L623.0 296.3 L622.5 296.0 L622.0 296.0 L621.5 298.0 L621.0 297.4 L620.5 302.2 L620.0 311.8 L619.5 321.1 L619.0 310.5 L618.5 306.5 L618.0 311.6 L617.5 303.1 L617.0 299.4 L616.5 297.8 L616.0 296.1 L615.5 298.2 L615.0 291.8 L614.5 292.4 L614.0 290.9 L613.5 289.5 L613.0 288.3 L612.5 288.1 L612.0 286.9 L611.5 285.5 L611.0 285.2 L610.5 287.1 L610.0 287.4 L609.5 289.3 L609.0 289.4 L608.5 292.6 L608.0 294.1 L607.5 296.0 L607.0 296.8 L606.5 294.6 L606.0 297.9 L605.5 298.7 L605.0 300.4 L604.5 297.9 L604.0 303.7 L603.5 306.6 L603.0 305.2 L602.5 305.1 L602.0 309.5 L601.5 317.5 L601.0 312.1 L600.5 315.9 L600.0 325.1 L599.5 326.6 L599.0 320.1 L598.5 325.9 L598.0 312.3 L597.5 318.7 L597.0 321.1 L596.5 318.0 L596.0 310.7 L595.5 301.0 L595.0 299.9 L594.5 292.4 L594.0 293.4 L593.5 290.3 L593.0 287.7 L592.5 286.7 L592.0 284.6 L591.5 284.1 L591.0 283.6 L590.5 283.9 L590.0 284.1 L589.5 283.9 L589.0 283.8 L588.5 283.3 L588.0 283.3 L587.5 283.5 L587.0 283.5 L586.5 283.0 L586.0 283.5 L585.5 283.0 L585.0 283.2 L584.5 283.8 L584.0 283.9 L583.5 283.4 L583.0 283.5 L582.5 284.1 L582.0 284.6 L581.5 285.2 L581.0 287.5 L580.5 288.1 L580.0 289.0 L579.5 292.1 L579.0 294.4 L578.5 299.0 L578.0 297.0 L577.5 301.4 L577.0 307.5 L576.5 319.8 L576.0 315.0 L575.5 300.5 L575.0 302.3 L574.5 293.8 L574.0 292.1 L573.5 287.5 L573.0 286.8 L572.5 288.7 L572.0 288.9 L571.5 289.9 L571.0 295.3 L570.5 298.6 L570.0 302.1 L569.5 301.3 L569.0 307.9 L568.5 298.2 L568.0 294.9 L567.5 292.0 L567.0 290.0 L566.5 287.2 L566.0 286.3 L565.5 285.5 L565.0 291.0 L564.5 292.5 L564.0 304.8 L563.5 306.3 L563.0 323.8 L562.5 319.6 L562.0 308.2 L561.5 306.3 L561.0 300.4 L560.5 301.3 L560.0 301.4 L559.5 309.5 L559.0 308.0 L558.5 310.8 L558.0 326.4 L557.5 315.5 L557.0 306.0 L556.5 304.7 L556.0 294.8 L555.5 293.0 L555.0 290.2 L554.5 286.3 L554.0 284.8 L553.5 284.4 L553.0 284.4 L552.5 285.0 L552.0 284.9 L551.5 285.4 L551.0 285.0 L550.5 285.5 L550.0 287.6 L549.5 291.1 L549.0 296.3 L548.5 302.8 L548.0 310.6 L547.5 300.4 L547.0 298.7 L546.5 293.4 L546.0 293.4 L545.5 290.4 L545.0 288.1 L544.5 285.2 L544.0 284.1 L543.5 286.0 L543.0 286.8 L542.5 289.7 L542.0 296.0 L541.5 293.6 L541.0 289.0 L540.5 289.2 L540.0 286.5 L539.5 285.5 L539.0 284.4 L538.5 284.1 L538.0 283.6 L537.5 283.0 L537.0 282.9 L536.5 282.7 L536.0 282.8 L535.5 282.5 L535.0 283.3 L534.5 283.4 L534.0 283.3 L533.5 283.9 L533.0 284.1 L532.5 285.9 L532.0 287.7 L531.5 288.6 L531.0 290.8 L530.5 298.8 L530.0 301.9 L529.5 306.6 L529.0 306.5 L528.5 307.2 L528.0 300.7 L527.5 307.6 L527.0 308.2 L526.5 308.2 L526.0 303.4 L525.5 306.6 L525.0 301.3 L524.5 298.7 L524.0 299.3 L523.5 303.9 L523.0 302.7 L522.5 300.0 L522.0 298.4 L521.5 303.8 L521.0 307.0 L520.5 314.5 L520.0 323.8 L519.5 323.8 L519.0 312.9 L518.5 306.9 L518.0 300.1 L517.5 301.2 L517.0 293.3 L516.5 292.2 L516.0 290.7 L515.5 287.5 L515.0 287.6 L514.5 286.1 L514.0 284.4 L513.5 283.7 L513.0 282.8 L512.5 283.4 L512.0 283.5 L511.5 284.2 L511.0 284.9 L510.5 285.6 L510.0 286.0 L509.5 287.2 L509.0 289.8 L508.5 290.6 L508.0 292.1 L507.5 293.5 L507.0 296.5 L506.5 296.2 L506.0 300.9 L505.5 300.1 L505.0 305.7 L504.5 308.5 L504.0 317.1 L503.5 324.0 L503.0 315.3 L502.5 331.7 L502.0 311.2 L501.5 310.9 L501.0 303.4 L500.5 300.6 L500.0 294.1 L499.5 293.8 L499.0 290.4 L498.5 287.0 L498.0 285.9 L497.5 284.1 L497.0 284.7 L496.5 284.7 L496.0 285.5 L495.5 286.9 L495.0 287.7 L494.5 289.3 L494.0 290.0 L493.5 293.4 L493.0 294.1 L492.5 293.1 L492.0 294.4 L491.5 295.7 L491.0 299.8 L490.5 300.9 L490.0 303.2 L489.5 307.9 L489.0 309.9 L488.5 310.7 L488.0 308.4 L487.5 305.5 L487.0 311.7 L486.5 312.8 L486.0 305.8 L485.5 310.6 L485.0 315.1 L484.5 315.4 L484.0 315.9 L483.5 305.4 L483.0 301.3 L482.5 299.9 L482.0 298.1 L481.5 294.9 L481.0 291.1 L480.5 291.5 L480.0 289.1 L479.5 286.5 L479.0 285.5 L478.5 285.8 L478.0 285.9 L477.5 285.6 L477.0 286.4 L476.5 287.9 L476.0 288.0 L475.5 288.8 L475.0 289.4 L474.5 289.9 L474.0 288.6 L473.5 289.6 L473.0 290.7 L472.5 290.8 L472.0 291.1 L471.5 288.9 L471.0 291.8 L470.5 291.8 L470.0 291.3 L469.5 292.1 L469.0 286.8 L468.5 283.8 L468.0 282.8 L467.5 282.1 L467.0 282.3 L466.5 282.5 L466.0 282.5 L465.5 282.2 L465.0 282.1 L464.5 281.8 L464.0 282.1 L463.5 281.7 L463.0 281.5 L462.5 281.6 L462.0 281.7 L461.5 281.5 L461.0 281.7 L460.5 281.6 L460.0 281.5 L459.5 281.8 L459.0 281.8 L458.5 282.1 L458.0 281.5 L457.5 281.7 L457.0 282.0 L456.5 282.1 L456.0 282.6 L455.5 283.6 L455.0 284.4 L454.5 284.9 L454.0 286.1 L453.5 287.7 L453.0 289.3 L452.5 292.1 L452.0 290.8 L451.5 292.1 L451.0 289.9 L450.5 291.5 L450.0 290.7 L449.5 291.0 L449.0 290.2 L448.5 289.2 L448.0 290.4 L447.5 291.5 L447.0 289.3 L446.5 290.9 L446.0 289.6 L445.5 290.7 L445.0 291.4 L444.5 297.4 L444.0 299.8 L443.5 298.6 L443.0 307.9 L442.5 295.7 L442.0 295.1 L441.5 292.0 L441.0 287.2 L440.5 285.5 L440.0 287.2 L439.5 288.2 L439.0 291.1 L438.5 293.6 L438.0 294.0 L437.5 301.7 L437.0 307.8 L436.5 313.2 L436.0 307.6 L435.5 303.1 L435.0 294.7 L434.5 292.7 L434.0 292.2 L433.5 288.5 L433.0 287.7 L432.5 285.2 L432.0 284.2 L431.5 283.6 L431.0 282.8 L430.5 283.3 L430.0 285.0 L429.5 285.2 L429.0 287.1 L428.5 287.0 L428.0 288.3 L427.5 290.2 L427.0 293.4 L426.5 295.0 L426.0 301.1 L425.5 300.9 L425.0 308.4 L424.5 317.2 L424.0 315.8 L423.5 324.2 L423.0 325.5 L422.5 322.3 L422.0 320.9 L421.5 329.1 L421.0 312.6 L420.5 310.0 L420.0 306.9 L419.5 298.3 L419.0 294.9 L418.5 289.0 L418.0 286.6 L417.5 285.4 L417.0 283.3 L416.5 282.8 L416.0 282.9 L415.5 282.6 L415.0 282.3 L414.5 282.2 L414.0 282.2 L413.5 282.0 L413.0 281.9 L412.5 282.1 L412.0 282.3 L411.5 282.7 L411.0 282.9 L410.5 282.8 L410.0 283.3 L409.5 283.7 L409.0 283.9 L408.5 283.4 L408.0 283.8 L407.5 284.1 L407.0 284.9 L406.5 284.9 L406.0 285.5 L405.5 288.0 L405.0 289.5 L404.5 294.9 L404.0 299.3 L403.5 307.9 L403.0 306.9 L402.5 305.4 L402.0 304.5 L401.5 303.7 L401.0 305.1 L400.5 303.4 L400.0 301.7 L399.5 301.3 L399.0 302.7 L398.5 308.0 L398.0 304.2 L397.5 305.0 L397.0 311.3 L396.5 311.4 L396.0 322.5 L395.5 330.4 L395.0 325.9 L394.5 317.4 L394.0 304.8 L393.5 308.0 L393.0 302.8 L392.5 299.1 L392.0 294.8 L391.5 292.6 L391.0 290.8 L390.5 290.4 L390.0 288.3 L389.5 287.4 L389.0 285.5 L388.5 286.5 L388.0 287.9 L387.5 290.8 L387.0 293.4 L386.5 299.4 L386.0 300.3 L385.5 310.6 L385.0 318.5 L384.5 315.9 L384.0 313.8 L383.5 313.4 L383.0 310.2 L382.5 316.6 L382.0 313.2 L381.5 312.1 L381.0 310.4 L380.5 315.6 L380.0 309.3 L379.5 313.2 L379.0 314.4 L378.5 317.5 L378.0 310.5 L377.5 324.5 L377.0 320.7 L376.5 327.8 L376.0 317.3 L375.5 313.1 L375.0 300.1 L374.5 298.3 L374.0 292.6 L373.5 289.0 L373.0 285.6 L372.5 284.5 L372.0 282.9 L371.5 282.1 L371.0 282.0 L370.5 282.9 L370.0 282.7 L369.5 282.9 L369.0 283.6 L368.5 283.7 L368.0 283.9 L367.5 284.1 L367.0 286.3 L366.5 289.2 L366.0 289.4 L365.5 296.1 L365.0 298.8 L364.5 306.6 L364.0 299.5 L363.5 294.6 L363.0 289.7 L362.5 288.1 L362.0 290.3 L361.5 292.3 L361.0 299.7 L360.5 303.4 L360.0 312.7 L359.5 331.7 L359.0 313.8 L358.5 309.4 L358.0 305.5 L357.5 297.0 L357.0 294.4 L356.5 290.3 L356.0 288.0 L355.5 285.3 L355.0 284.3 L354.5 282.8 L354.0 284.6 L353.5 287.0 L353.0 289.4 L352.5 293.6 L352.0 297.7 L351.5 306.3 L351.0 307.3 L350.5 323.8 L350.0 322.6 L349.5 322.1 L349.0 310.6 L348.5 311.5 L348.0 315.0 L347.5 307.4 L347.0 311.9 L346.5 301.5 L346.0 298.6 L345.5 297.4 L345.0 297.5 L344.5 296.0 L344.0 300.9 L343.5 297.7 L343.0 300.6 L342.5 310.4 L342.0 317.2 L341.5 320.2 L341.0 312.7 L340.5 323.6 L340.0 327.5 L339.5 327.8 L339.0 318.6 L338.5 299.3 L338.0 296.5 L337.5 290.6 L337.0 285.6 L336.5 283.3 L336.0 281.4 L335.5 281.5 L335.0 281.5 L334.5 281.7 L334.0 281.7 L333.5 281.8 L333.0 281.9 L332.5 282.4 L332.0 282.0 L331.5 282.3 L331.0 282.8 L330.5 283.8 L330.0 284.9 L329.5 286.4 L329.0 287.7 L328.5 291.4 L328.0 292.1 L327.5 297.4 L327.0 296.7 L326.5 305.2 L326.0 302.8 L325.5 299.9 L325.0 300.2 L324.5 301.7 L324.0 300.7 L323.5 298.7 L323.0 298.6 L322.5 299.5 L322.0 307.1 L321.5 303.8 L321.0 310.4 L320.5 315.8 L320.0 304.8 L319.5 300.2 L319.0 296.2 L318.5 292.1 L318.0 287.5 L317.5 285.7 L317.0 285.4 L316.5 284.0 L316.0 283.8 L315.5 282.8 L315.0 283.5 L314.5 286.6 L314.0 292.0 L313.5 297.8 L313.0 302.7 L312.5 317.1 L312.0 309.1 L311.5 308.3 L311.0 310.0 L310.5 305.6 L310.0 306.5 L309.5 305.7 L309.0 303.6 L308.5 309.6 L308.0 315.8 L307.5 307.1 L307.0 302.1 L306.5 302.1 L306.0 304.0 L305.5 295.9 L305.0 297.5 L304.5 296.0 L304.0 292.2 L303.5 291.7 L303.0 288.9 L302.5 289.6 L302.0 288.1 L301.5 286.6 L301.0 286.0 L300.5 285.7 L300.0 284.8 L299.5 284.1 L299.0 283.7 L298.5 283.1 L298.0 282.8 L297.5 283.1 L297.0 283.1 L296.5 283.9 L296.0 284.7 L295.5 285.2 L295.0 285.0 L294.5 286.0 L294.0 286.7 L293.5 286.1 L293.0 288.3 L292.5 287.9 L292.0 288.2 L291.5 289.7 L291.0 290.0 L290.5 289.2 L290.0 292.2 L289.5 292.1 L289.0 293.3 L288.5 293.1 L288.0 295.8 L287.5 296.8 L287.0 301.3 L286.5 301.1 L286.0 302.4 L285.5 309.0 L285.0 313.8 L284.5 319.1 L284.0 321.1 L283.5 318.7 L283.0 315.2 L282.5 324.8 L282.0 321.2 L281.5 325.0 L281.0 331.6 L280.5 325.7 L280.0 321.2 L279.5 318.9 L279.0 312.9 L278.5 307.9 L278.0 308.9 L277.5 310.8 L277.0 310.3 L276.5 306.2 L276.0 309.1 L275.5 313.1 L275.0 314.4 L274.5 313.2 L274.0 312.2 L273.5 318.8 L273.0 317.6 L272.5 314.2 L272.0 317.6 L271.5 319.8 L271.0 314.3 L270.5 321.0 L270.0 326.0 L269.5 329.0 L269.0 304.1 L268.5 295.9 L268.0 289.7 L267.5 285.0 L267.0 282.8 L266.5 283.3 L266.0 284.8 L265.5 285.8 L265.0 286.9 L264.5 290.7 L264.0 290.7 L263.5 289.6 L263.0 290.7 L262.5 292.0 L262.0 295.0 L261.5 299.7 L261.0 306.6 L260.5 307.7 L260.0 323.7 L259.5 311.3 L259.0 315.7 L258.5 302.0 L258.0 301.3 L257.5 302.4 L257.0 306.1 L256.5 301.6 L256.0 309.2 L255.5 302.9 L255.0 298.2 L254.5 298.6 L254.0 299.0 L253.5 299.3 L253.0 300.4 L252.5 301.4 L252.0 309.2 L251.5 301.5 L251.0 303.7 L250.5 299.5 L250.0 294.7 L249.5 292.2 L249.0 290.6 L248.5 290.7 L248.0 292.5 L247.5 292.3 L247.0 292.1 L246.5 296.0 L246.0 290.0 L245.5 287.0 L245.0 284.1 L244.5 282.1 L244.0 281.2 L243.5 280.2 L243.0 279.5 L242.5 278.8 L242.0 278.5 Z"/>
<!-- player bar -->
<rect x="218.5" y="392.8" width="823.6" height="50.2" fill="#222126"/>
<path d="M621 408 Q621 406 622.8 407.1 L639 417.2 Q640.6 418.3 639 419.4 L622.8 429.5 Q621 430.5 621 428.5 Z" fill="#bdbdbd"/>
<!-- buttons -->
<rect x="1110.5" y="259" width="272.6" height="55" rx="7" fill="#38373c"/>
<rect x="1110.5" y="332" width="272.6" height="55" rx="7" fill="#38373c"/>
<rect x="1336" y="259" width="1" height="55" fill="#2b2a2f"/>
<path d="M1140.2 277.2 V288.6 M1135.6 284 L1140.2 288.6 L1144.8 284" stroke="#f2f2f2" stroke-width="2.3" fill="none" stroke-linecap="round" stroke-linejoin="round"/>
<rect x="1131" y="292" width="18.5" height="2.6" rx="1" fill="#f2f2f2"/>
<path d="M1351.8 283.1 L1358.6 289.4 L1365.4 283.1" stroke="#d9d9db" stroke-width="1.45" fill="none" stroke-linecap="round"/>
<path d="M1133.2 366.9 L1134.7 360.6 L1142.7 352.6 A3.4 3.4 0 0 1 1147.5 357.4 L1139.5 365.4 Z M1134.7 360.6 L1139.5 365.4 M1141.5 353.7 L1146.4 358.6" stroke="#f2f2f2" stroke-width="2.1" fill="none" stroke-linejoin="round"/>
<!-- tiles -->
<g fill="#222126">
<rect x="1110.5" y="469" width="59.6" height="55" rx="7"/>
<rect x="1181.5" y="469" width="59.6" height="55" rx="7"/>
<rect x="1252.5" y="469" width="59.6" height="55" rx="7"/>
<rect x="1323.5" y="469" width="59.6" height="55" rx="7"/>
</g>
<g stroke="#aeaeb1" stroke-width="2" fill="none">
<rect x="1131" y="489.9" width="18.5" height="14.1" rx="3.5"/>
<rect x="1202" y="489.9" width="18.5" height="14.1" rx="3.5"/>
</g>
<path d="M1138 493.5 L1143.5 497 L1138 500.5 Z" fill="#aeaeb1"/>
<rect x="1207.2" y="498" width="8.5" height="2.2" rx="0.6" fill="#aeaeb1"/>
<g stroke="#aeaeb1" stroke-width="2" stroke-linecap="round">
<path d="M1274 493.2 V500.3 M1278 490 V503.8 M1282 494.5 V499.3 M1286 492.2 V501.3 M1290.2 495.7 V498.1"/>
</g>
<g fill="#aeaeb1">
<circle cx="1343.7" cy="496.7" r="2.5"/><circle cx="1353" cy="496.7" r="2.5"/><circle cx="1362.3" cy="496.7" r="2.5"/>
</g>
</svg>
<div id="myproj">My projects</div>
<div id="avatar"><span>O</span></div>
<div class="lbl" style="left:334.10px">00:20</div>
<div class="lbl" style="left:427.85px">00:40</div>
<div class="lbl" style="left:521.60px">01:00</div>
<div class="lbl" style="left:615.35px">01:20</div>
<div class="lbl" style="left:709.10px">01:40</div>
<div class="lbl" style="left:802.85px">02:00</div>
<div class="lbl" style="left:896.60px">02:20</div>
<div class="lbl" style="left:990.35px">02:40</div>
<div id="time">00:00<span style="margin:0 0.3px">&nbsp;&nbsp;/&nbsp;&nbsp;</span><b>02:46</b></div>
<div id="title">Cut 22 Apr 2026</div>
<div id="sub">6.3 MB<span style="margin:0 9.9px">/</span>MP3</div>
<div class="bt" style="top:259.7px;left:1164.5px">Download</div>
<div class="bt" style="top:332.2px;left:1164.6px;letter-spacing:0">Edit</div>
<div id="cont">Continue in ...</div>
</body></html>
